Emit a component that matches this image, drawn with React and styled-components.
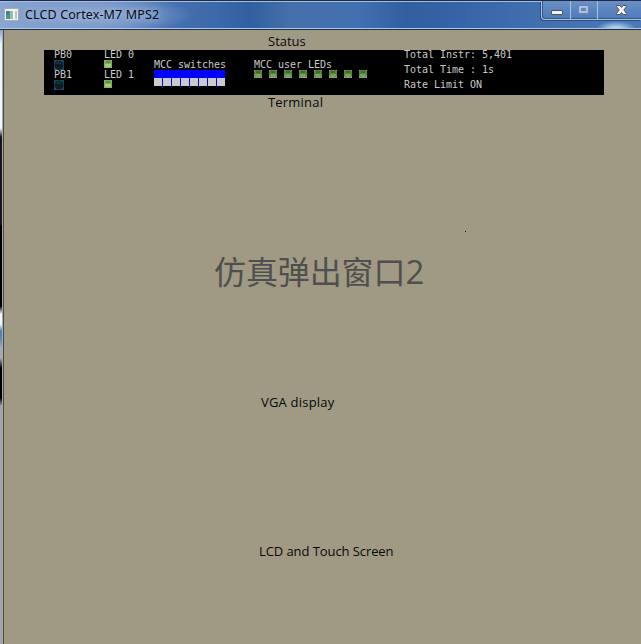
import React from "react";
import styled, { createGlobalStyle } from "styled-components";

const Global = createGlobalStyle`
  body { margin: 0; overflow: hidden; background: #a09a84; }
  * { box-sizing: border-box; }
`;

const Window = styled.div`
  width: 641px;
  height: 644px;
  display: flex;
  flex-direction: column;
  overflow: hidden;
`;

const TitleBar = styled.header`
  height: 30px;
  flex: none;
  display: flex;
  align-items: flex-start;
  padding-left: 4px;
  border-top: 1px solid #1c2b4c;
  border-bottom: 1px solid #1b2f50;
  box-shadow: inset 0 1px #a9bedd, inset 0 -1px #b0cbe4;
  background:
    radial-gradient(ellipse 20px 8px at 616px 28px, #b4d4f4 20%, transparent 100%),
    radial-gradient(ellipse 105px 20px at 88px 14px, #90aad2 0%, #83a0cdcc 50%, transparent 100%),
    linear-gradient(90deg, #8ba7d2 0, #6f92c6 100px, #4771b1 170px, #3c69a9 215px, #315f9f 250px, #4470ac 290px, #426faf 360px, #315f9f 405px, #3565a8 460px, #426fb0 540px, #4b79b8 641px);
`;

const AppIcon = styled.svg`
  width: 16px;
  height: 14px;
  margin-top: 7px;
`;

const Title = styled.h1`
  margin: 6px 0 0 5px;
  flex: 1;
  font: 400 12.5px/16px "Noto Sans", sans-serif;
  letter-spacing: 0.13px;
  white-space: nowrap;
  color: #050b18;
  text-shadow: 0 0 5px #b6c8e4;
`;

const Controls = styled.div`
  width: 100px;
  height: 19px;
  display: flex;
  border: 1px solid #a8c1df;
  border-width: 0 0 1px 1px;
  border-radius: 0 0 0 4px;
  box-shadow: -1px 1px #2c4d7c, inset 1px -1px #35588a;
  background: linear-gradient(#6d90c3, #5c86c0 45%, #4e7ab8);
`;

const ControlButton = styled.button`
  width: ${(p) => p.$width}px;
  height: 18px;
  padding: 0;
  border: 0;
  border-right: ${(p) => (p.$last ? "0" : "1px solid #a8c1df")};
  background: none;

  svg { display: block; }
`;

const Body = styled.div`
  flex: 1;
  display: flex;
`;

const LeftEdge = styled.div`
  width: 4px;
  border-right: 1px solid #4b4840;
  box-shadow: inset -1px 0 #a9a9a9;
  background: linear-gradient(
    #85a4cf 0, #e8f7ff 14px, #eefaff 98px, #15181b 107px, #15181b 194px, #000 196px,
    #000 276px, #eefaff 284px, #eefaff 294px, #4e7cc0 301px, #5c86c0 309px,
    #9eaeb4 318px, #9eaeb4 328px, #000 338px, #000 368px, #9aa6a9 376px, #9aa6a9 100%
  );
`;

const Client = styled.main`
  flex: 1;
  display: flex;
  flex-direction: column;
  background: #a09a84;
`;

const Caption = styled.div`
  height: ${(p) => p.$height}px;
  padding: ${(p) => p.$top || 0}px 0 0 ${(p) => p.$left}px;
  font: 400 13px/${(p) => p.$line || 17}px "Open Sans", sans-serif;
  letter-spacing: ${(p) => p.$spacing || 0}px;
  white-space: nowrap;
  color: #080808;
`;

const Panel = styled.section`
  width: 560px;
  height: 45px;
  margin-left: 40px;
  padding-left: 10px;
  display: grid;
  grid-template-columns: 50px 50px 100px 150px 200px;
  background: #000;
  color: #cacaca;
  font: 400 10px/10px "DejaVu Sans Mono", monospace;
  letter-spacing: -0.02px;
  white-space: pre;
`;

const Column = styled.div`
  display: flex;
  flex-direction: column;
  padding-top: ${(p) => p.$top || 0}px;
`;

const PanelText = styled.span`
  height: ${(p) => p.$row || 10}px;
`;

const PanelIcon = styled.svg`
  display: block;
  margin-bottom: ${(p) => p.$gap || 0}px;
`;

const Switches = styled.div`
  width: 71px;
  height: 16px;
  padding-top: 8px;
  display: flex;
  gap: 1px;
  background: #00f;
`;

const Switch = styled.i`
  width: 8px;
  height: 8px;
  background: #cbcbcb;
`;

const LedRow = styled.div`
  display: flex;
  gap: 7px;
`;

const Watermark = styled.div`
  height: 147px;
  padding-left: 210px;
  font: 400 32px/46px "Noto Sans CJK SC", sans-serif;
  letter-spacing: -0.1px;
  white-space: nowrap;
  color: #4f4f4e;
`;

const WatermarkDigit = styled.span`
  font: 400 33px/40px "Open Sans", sans-serif;
`;

const Spacer = styled.div`
  height: 135px;
  padding: 119px 0 0 461px;
`;

const Speck = styled.div`
  width: 1px;
  height: 1px;
  background: #191713;
`;

function Led({ dim }) {
  return (
    <PanelIcon width="8" height="8" viewBox="0 0 8 8" $gap={dim ? 0 : 2}>
      <path fill={dim ? "#999781" : "#a3a184"} d="M0 0h8v8H0z" />
      <path fill={dim ? "#57803d" : "#7ead59"} d="M1 0h6v1h1v5H7v1H1V6H0V1h1z" />
      <path fill={dim ? "#456732" : "#608c47"} d="M2 1h4v2H2z" />
      <path fill={dim ? "#70a84f" : "#98d374"} d="M1 4h6v2H6v1H2V6H1z" />
    </PanelIcon>
  );
}

function PushButton() {
  return (
    <PanelIcon width="10" height="10" viewBox="0 0 10 10">
      <path fill="#0c4667" d="M0 0h10v10H0z" />
      <circle cx="5" cy="5.2" r="4.3" fill="#15191c" />
      <path d="M2.5 3.5 5 2.5l2 1.5" stroke="#383e42" fill="none" />
      <path d="M0 8v2h3" stroke="#08679b" fill="none" />
    </PanelIcon>
  );
}

export default function App() {
  return (
    <>
      <Global />
      <Window>
        <TitleBar>
          <AppIcon viewBox="0 0 16 14">
            <path fill="#f0f2f0" stroke="#a4adb5" d="M.5.5h14v12H.5z" />
            <path fill="#489983" d="M2 3h6v8H2z" />
            <path fill="#4a78a8" d="M2 3h3v4H2z" />
            <path fill="#91c1ad" d="M6 3h3v8H6z" />
            <path fill="#f7f7f7" d="M9 3h2v8H9z" />
            <path fill="#b5c9c2" d="M11 3h2v8h-2z" />
          </AppIcon>
          <Title>CLCD Cortex-M7 MPS2</Title>
          <Controls>
            <ControlButton $width={29} aria-label="Minimize">
              <svg width="28" height="18">
                <rect x="9.5" y="9.5" width="11" height="4" rx=".5" fill="#f4f4f4" stroke="#4c5264" />
              </svg>
            </ControlButton>
            <ControlButton $width={27} aria-label="Maximize">
              <svg width="26" height="18">
                <path fill="#a9bfdd" stroke="#6787b3" fillRule="evenodd" d="M7.500 4.500h10v8h-10zM10.500 7.500h4v2h-4z" />
              </svg>
            </ControlButton>
            <ControlButton $width={43} $last aria-label="Close">
              <svg width="43" height="18">
                <path
                  fill="#f7f7f7"
                  stroke="#4c5264"
                  d="M18.500 4.500h3.300L23.500 6.500l1.700-2h3.300v1L25.800 9l2.700 3.500v1h-3.300l-1.700-2-1.700 2h-3.300v-1L21.200 9l-2.700-3.500z"
                />
              </svg>
            </ControlButton>
          </Controls>
        </TitleBar>
        <Body>
          <LeftEdge />
          <Client>
            <Caption $height={20} $top={3} $left={264}>Status</Caption>
            <Panel>
              <Column>
                <PanelText>PB0</PanelText>
                <PushButton />
                <PanelText>PB1</PanelText>
                <PushButton />
              </Column>
              <Column>
                <PanelText>LED 0</PanelText>
                <Led />
                <PanelText>LED 1</PanelText>
                <Led />
              </Column>
              <Column $top={10}>
                <PanelText>MCC switches</PanelText>
                <Switches>
                  {Array.from({ length: 8 }, (_, i) => <Switch key={i} />)}
                </Switches>
              </Column>
              <Column $top={10}>
                <PanelText>MCC user LEDs</PanelText>
                <LedRow>
                  {Array.from({ length: 8 }, (_, i) => <Led key={i} dim />)}
                </LedRow>
              </Column>
              <Column>
                <PanelText $row={15}>Total Instr: 5,401</PanelText>
                <PanelText $row={15}>Total Time : 1s</PanelText>
                <PanelText $row={15}>Rate Limit ON</PanelText>
              </Column>
            </Panel>
            <Caption $height={17} $line={15} $left={264} $spacing={0.2}>Terminal</Caption>
            <Spacer><Speck /></Spacer>
            <Watermark>仿真弹出窗口<WatermarkDigit>2</WatermarkDigit></Watermark>
            <Caption $height={149} $left={257} $spacing={0.2}>VGA display</Caption>
            <Caption $height={30} $left={255} $spacing={-0.08}>LCD and Touch Screen</Caption>
          </Client>
        </Body>
      </Window>
    </>
  );
}
